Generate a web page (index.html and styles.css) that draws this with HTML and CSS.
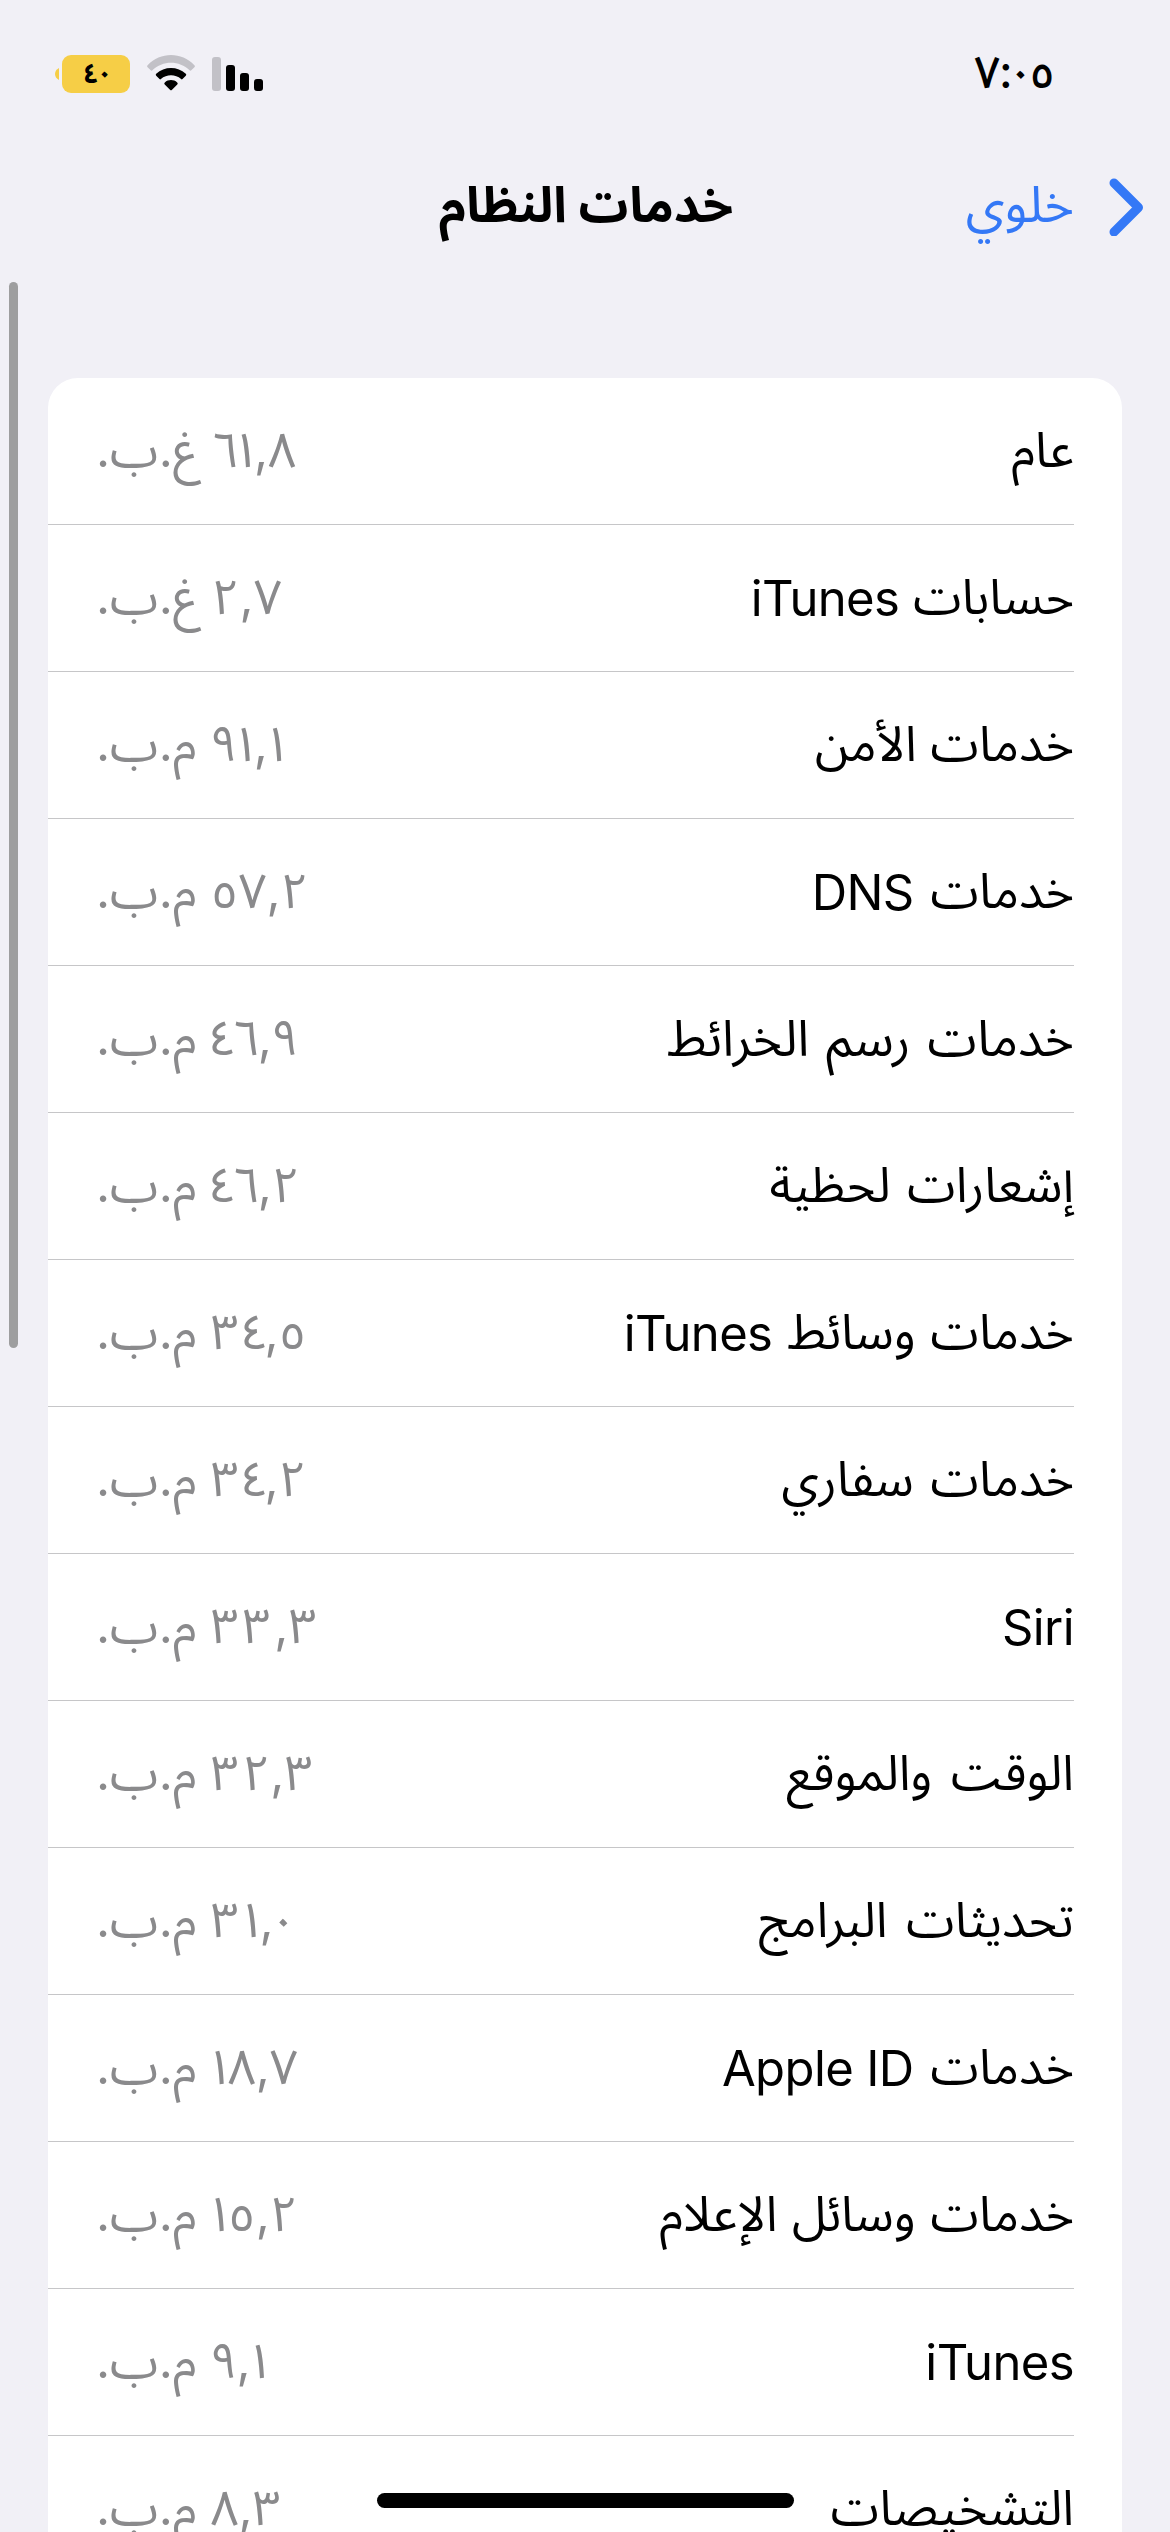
FILE: index.html
```html
<!DOCTYPE html>
<html lang="ar" dir="rtl">
<head>
<meta charset="utf-8">
<title>خدمات النظام</title>
<link rel="stylesheet" href="styles.css">
</head>
<body>
<div class="screen">
  <header class="status">
    <time class="clock">٧<span class="colon">:</span><span class="zero">٠</span>٥</time>
    <div class="indicators">
      <svg class="signal" viewBox="0 0 51 34"><rect class="dim" width="9" height="34" rx="3"/><rect x="14" y="8" width="9" height="26" rx="3"/><rect x="28" y="16" width="9" height="18" rx="3"/><rect x="42" y="22" width="9" height="12" rx="3"/></svg>
      <svg class="wifi" viewBox="0 0 48 36"><path class="dim" d="M0.6 10.2C13.4-3.4 34.6-3.4 47.4 10.2Q48.4 11.2 47.4 12.2L44 15.4Q43.3 16 42.6 15.2C32.4 5.2 15.6 5.2 5.4 15.2Q4.700 16 4 15.400L0.600 12.200Q-.4 11.200.6 10.200Z"/><path d="M9.200 18.800C17.400 10.900 30.600 10.900 38.800 18.800Q39.800 19.800 38.800 20.800L35.500 24.100Q34.800 24.700 34.100 24.100C28.300 19.100 19.700 19.100 13.900 24.100Q13.200 24.700 12.500 24.100L9.200 20.800Q8.200 19.800 9.200 18.800Z"/><path d="M17.800 27.400C21.300 24.200 26.700 24.200 30.200 27.400Q31.300 28.400 30.300 29.400L24.800 35Q24 35.700 23.200 35L17.700 29.400Q16.700 28.400 17.800 27.400Z"/></svg>
      <div class="battery"><span class="cell"><span class="level">٤<span class="zero">٠</span></span></span><svg class="nub" viewBox="0 0 4 12"><path d="M4 0C-1.300 2.500-1.300 9.500 4 12Z"/></svg></div>
    </div>
  </header>
  <nav class="navbar">
    <a class="back"><svg class="chevron" viewBox="0 0 34 58"><path d="M5 5L29.500 29.500L5 54"/></svg><span class="back-label">خلوي</span></a>
    <h1 class="title">خدمات النظام</h1>
  </nav>
  <ul class="list">
    <li class="row"><span class="name">عام</span><span class="usage"><span class="six">٦</span><span class="one">١</span>,٨ غ.ب.</span></li>
    <li class="row"><span class="name">حسابات <span class="latin">iTunes</span></span><span class="usage">٢,٧ غ.ب.</span></li>
    <li class="row"><span class="name">خدمات الأمن</span><span class="usage"><span class="nine">٩</span><span class="one">١</span>,<span class="one">١</span> م.ب.</span></li>
    <li class="row"><span class="name loose">خدمات <span class="latin">DNS</span></span><span class="usage">٥٧,٢ م.ب.</span></li>
    <li class="row"><span class="name loose large">خدمات رسم الخرائط</span><span class="usage"><span class="four">٤</span><span class="six">٦</span>,<span class="nine">٩</span> م.ب.</span></li>
    <li class="row"><span class="name loose">إشعارات لحظية</span><span class="usage"><span class="four">٤</span><span class="six">٦</span>,٢ م.ب.</span></li>
    <li class="row"><span class="name slight">خدمات وسائط <span class="latin">iTunes</span></span><span class="usage"><span class="three">٣</span><span class="four">٤</span>,٥ م.ب.</span></li>
    <li class="row"><span class="name loose">خدمات سفاري</span><span class="usage"><span class="three">٣</span><span class="four">٤</span>,٢ م.ب.</span></li>
    <li class="row"><span class="name"><span class="latin">Siri</span></span><span class="usage"><span class="three">٣</span><span class="three">٣</span>,<span class="three">٣</span> م.ب.</span></li>
    <li class="row"><span class="name looser">الوقت والموقع</span><span class="usage"><span class="three">٣</span>٢,<span class="three">٣</span> م.ب.</span></li>
    <li class="row"><span class="name looser">تحديثات البرامج</span><span class="usage"><span class="three">٣</span><span class="one">١</span>,<span class="zero">٠</span> م.ب.</span></li>
    <li class="row"><span class="name loose">خدمات <span class="latin">Apple ID</span></span><span class="usage"><span class="one">١</span>٨,٧ م.ب.</span></li>
    <li class="row"><span class="name slight">خدمات وسائل الإعلام</span><span class="usage"><span class="one">١</span>٥,٢ م.ب.</span></li>
    <li class="row"><span class="name"><span class="latin">iTunes</span></span><span class="usage"><span class="nine">٩</span>,<span class="one">١</span> م.ب.</span></li>
    <li class="row"><span class="name">التشخيصات</span><span class="usage">٨,<span class="three">٣</span> م.ب.</span></li>
  </ul>
  <div class="scrollbar"></div>
  <div class="home-indicator"></div>
</div>
</body>
</html>
```
FILE: styles.css
```css
* { box-sizing: border-box; }
body {
  margin: 0;
  background: #f1f0f6;
  color: #000;
  font-family: Inter, "Noto Sans Arabic", "DejaVu Sans", sans-serif;
}
.screen {
  position: relative;
  width: 1170px;
  height: 2532px;
  overflow: hidden;
  display: flex;
  flex-direction: column;
}
.status {
  height: 148px;
  flex: none;
  display: flex;
  justify-content: space-between;
  align-items: center;
  padding: 0 115px 0 55px;
}
.clock { font-size: 45px; font-weight: 500; direction: ltr; padding-bottom: 1px; }
.colon { margin: 0 -1px; }
.indicators { display: flex; align-items: center; gap: 17px; }
.signal { width: 51px; height: 34px; }
.wifi { width: 48px; height: 36px; margin-top: -2px; }
.dim { fill: #c2c1c7; }
.battery { display: flex; align-items: center; gap: 3px; }
.cell {
  width: 68px;
  height: 38px;
  border-radius: 9px;
  background: #f6ce46;
  display: flex;
  align-items: center;
  justify-content: center;
}
.level { font-size: 28px; font-weight: 700; line-height: 1; padding: 0 0 2px 1px; }
.nub { width: 4px; height: 12px; fill: #f6ce46; }
.navbar {
  height: 118px;
  flex: none;
  display: grid;
  grid-template-columns: 1fr auto 1fr;
  align-items: center;
  padding: 0 27px;
}
.back { display: flex; align-items: center; gap: 35px; color: #3478f6; }
.chevron { width: 34px; height: 58px; margin-top: -1px; fill: none; stroke: #3478f6; stroke-width: 9; stroke-linecap: round; stroke-linejoin: round; }
.back-label { font-size: 51px; white-space: nowrap; padding-bottom: 3px; }
.title { margin: 0; font-size: 49.5px; font-weight: 700; white-space: nowrap; padding: 0 0 1px 2px; }
.list {
  list-style: none;
  margin: 112px 48px 0;
  padding: 0;
  background: #fff;
  border-radius: 30px 30px 0 0;
  flex: none;
}
.row {
  height: 147px;
  margin-right: 48px;
  padding: 0 0 3px 48px;
  border-bottom: 1px solid #c6c6c8;
  display: flex;
  align-items: center;
  justify-content: space-between;
  font-size: 49px;
  line-height: 70px;
  white-space: nowrap;
}
.large { font-size: 50px; }
.slight { word-spacing: 1px; }
.loose { word-spacing: 3px; }
.looser { word-spacing: 5px; }
.latin { letter-spacing: -0.6px; word-spacing: 0; vertical-align: -2px; line-height: 1; }
.usage { color: #8a8a8c; }
/* proportional spacing for the Arabic-Indic digits */
.zero { margin: 0 -0.09em; }
.one { margin: 0 -0.12em 0 -0.1em; }
.three { margin-right: 0.08em; }
.four { margin: 0 -0.08em 0 -0.04em; }
.six { margin: 0 -0.05em 0 -0.01em; }
.nine { margin: 0 -0.02em; }
.scrollbar {
  position: absolute;
  left: 9px;
  top: 282px;
  width: 9px;
  height: 1066px;
  border-radius: 5px;
  background: #9e9e9f;
}
.home-indicator {
  position: absolute;
  left: 377px;
  top: 2493px;
  width: 417px;
  height: 15px;
  border-radius: 8px;
  background: #000;
}
```
